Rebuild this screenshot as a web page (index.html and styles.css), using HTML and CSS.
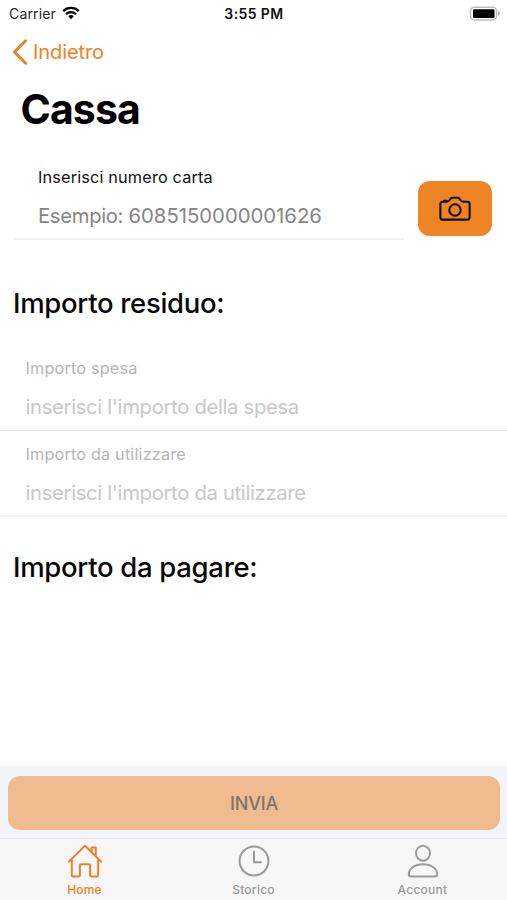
FILE: index.html
```html
<!DOCTYPE html>
<html lang="it">
<head>
<meta charset="utf-8">
<title>Cassa</title>
<link rel="stylesheet" href="styles.css">
</head>
<body>
<div class="screen">
  <header class="status">
    <div class="status-left"><span class="carrier">Carrier</span>
      <svg class="wifi" width="18" height="14" viewBox="0 0 18 14"><path d="M1.2 5.1a11.2 11.2 0 0 1 15.6 0M4 8.2a7.2 7.2 0 0 1 10 0" fill="none" stroke="#000" stroke-width="2.3"/><path d="M6.2 10.3a4.1 4.1 0 0 1 5.6 0L9 13.2z"/></svg>
    </div>
    <span class="time">3:55 PM</span>
    <div class="status-right">
      <svg width="32" height="16" viewBox="0 0 32 16"><rect x="1.5" y="1.2" width="26" height="12.8" rx="4" fill="#fff" stroke="#bdbdbd" stroke-width="1.5"/><rect x="4" y="3.3" width="21.5" height="8.8" rx="1.2"/><path d="M29 5.2q2 .8 2 2.3t-2 2.3z" fill="#aaa"/></svg>
    </div>
  </header>
  <nav class="back">
    <svg width="17" height="28" viewBox="0 0 17 28"><path d="M14.6 2.8 3.4 14l11.2 11.2" fill="none" stroke="#ef8122" stroke-width="3" stroke-linecap="round" stroke-linejoin="round"/></svg>
    <span class="back-text">Indietro</span>
  </nav>
  <main class="content">
    <h1>Cassa</h1>
    <section class="card-row">
      <div class="field card-field">
        <span class="label card-label">Inserisci numero carta</span>
        <span class="hint card-hint">Esempio: <span class="digits">6085150000001626</span></span>
      </div>
      <div class="camera">
        <svg width="34" height="28" viewBox="0 0 34 28" fill="none" stroke="#160c04" stroke-width="2.1" stroke-linejoin="round"><path d="M4.7 6.7h4.1c1.5 0 2.1-.7 2.8-1.7l.8-1.2q.7-1 1.9-1h5.4q1.2 0 1.9 1l.8 1.2c.7 1 1.3 1.7 2.8 1.7h4.1q2.3 0 2.3 2.3v13.3q0 2.3-2.3 2.3H4.7q-2.3 0-2.3-2.3V9q0-2.3 2.3-2.3z"/><circle cx="17" cy="15" r="5.7"/><path d="M6 5.8h2.6" stroke-width="2" stroke-linecap="round"/></svg>
      </div>
    </section>
    <h2 class="residuo"><span>Importo residuo:</span></h2>
    <section class="amounts">
      <div class="field"><span class="label">Importo spesa</span><span class="hint">inserisci l'importo della spesa</span></div>
      <div class="field last"><span class="label">Importo da utilizzare</span><span class="hint">inserisci l'importo da utilizzare</span></div>
    </section>
    <h2 class="pagare"><span>Importo da pagare:</span></h2>
  </main>
  <footer>
    <div class="submit-wrap"><div class="submit">INVIA</div></div>
    <div class="tabs">
      <div class="tab active">
        <svg width="36" height="36" viewBox="0 0 36 36" fill="none" stroke="currentColor" stroke-width="2" stroke-linecap="round" stroke-linejoin="round"><path d="M1.8 18.6 18 2.8l16.2 15.8M4.8 16v16.2q0 1.3 1.3 1.3h5.5q1.3 0 1.3-1.3V22.5q0-1.3 1.3-1.3h7.6q1.3 0 1.3 1.3v9.7q0 1.3 1.3 1.3h5.5q1.3 0 1.3-1.3V16M24.6 9.2V4.5h4.2v8.7"/></svg>
        <span class="tab-home">Home</span>
      </div>
      <div class="tab">
        <svg width="36" height="36" viewBox="0 0 36 36" fill="none" stroke="currentColor" stroke-width="2" stroke-linecap="round" stroke-linejoin="round"><circle cx="18" cy="18" r="14.4"/><path d="M18 8.5v10.7h7"/></svg>
        <span class="tab-history">Storico</span>
      </div>
      <div class="tab">
        <svg width="36" height="36" viewBox="0 0 36 36" fill="none" stroke="currentColor" stroke-width="2" stroke-linejoin="round"><ellipse cx="18" cy="10.2" rx="7" ry="7.5"/><path d="M3.8 31.3C3.8 25.8 9.5 21.3 18 21.3s14.2 4.5 14.2 10q0 2.2-2.2 2.2H6q-2.2 0-2.2-2.2z"/></svg>
        <span class="tab-account">Account</span>
      </div>
    </div>
  </footer>
</div>
</body>
</html>
```
FILE: styles.css
```css
* { box-sizing: border-box; }
body { margin: 0; background: #fff; color: #000; font-family: Inter, "Liberation Sans", sans-serif; }
.screen { width: 507px; height: 900px; display: flex; flex-direction: column; overflow: hidden; }
svg { display: block; flex: none; }
span { white-space: nowrap; }
.status { height: 28px; display: grid; grid-template-columns: 1fr auto 1fr; align-items: center; padding: 0 6px 0 9px; font-size: 14px; line-height: 28px; }
.status-left { display: flex; align-items: center; gap: 6px; color: #222; }
.carrier { letter-spacing: 0.15px; }
.wifi { margin-top: -3px; }
.time { font-weight: 600; color: #111; letter-spacing: 0.4px; margin-left: -2px; }
.status-right { display: flex; justify-content: flex-end; margin-top: -1px; }
.back { height: 48px; display: flex; align-items: center; gap: 5px; padding-left: 11px; color: #ef8122; font-size: 20px; letter-spacing: -0.1px; }
.content { flex: 1; }
h1 { margin: 0; padding: 8px 0 1px 20.5px; font-size: 41px; line-height: 50px; font-weight: 700; letter-spacing: -0.9px; }
.card-row { display: flex; align-items: flex-start; padding: 27px 15px 0 14px; justify-content: space-between; }
.field { display: flex; flex-direction: column; height: 86px; padding: 13px 0 0 25.5px; border-bottom: 1px solid #e7e7e7; }
.card-field { width: 390px; height: 78px; padding: 5px 0 0 24px; border-bottom: 2px solid #f2f2f2; }
.label { font-size: 16.3px; line-height: 20px; color: #b5b5b5; letter-spacing: 0.15px; }
.card-label { color: #111; }
.hint { font-size: 20.3px; line-height: 26px; margin-top: 16px; color: #c8c8c8; letter-spacing: -0.34px; }
.card-hint { color: #858585; }
.digits { letter-spacing: 0; }
.camera { width: 74px; height: 55px; margin-top: 19px; background: #ef8427; border-radius: 12px; display: grid; place-items: center; }
h2 { margin: 0; padding-left: 13px; font-size: 27.5px; line-height: 34px; font-weight: 500; color: #080808; letter-spacing: -0.3px; }
.residuo { margin-top: 46px; }
.amounts { margin-top: 25px; }
.last { border-bottom: 2px solid #f3f3f3; }
.pagare { margin-top: 33px; }
.submit-wrap { height: 72px; padding: 9.5px 7px 8.5px 8px; background: #f2f4f9; }
.submit { height: 54px; border-radius: 12px; background: #f1bb90; color: #7d746d; font-size: 18px; line-height: 56px; font-weight: 500; text-align: center; letter-spacing: -0.2px; }
.tabs { height: 62px; display: grid; grid-template-columns: repeat(3, 1fr); background: #f7f7f7; border-top: 1px solid #e6e6ea; }
.tab { display: flex; flex-direction: column; align-items: center; padding-top: 4px; color: #999; font-size: 12px; line-height: 14px; font-weight: 500; }
.tab span { margin-top: 4px; }
.tab-home { letter-spacing: 0.2px; }
.tab-history, .tab-account { letter-spacing: 0.25px; }
.tab.active { color: #ef8122; }
```
